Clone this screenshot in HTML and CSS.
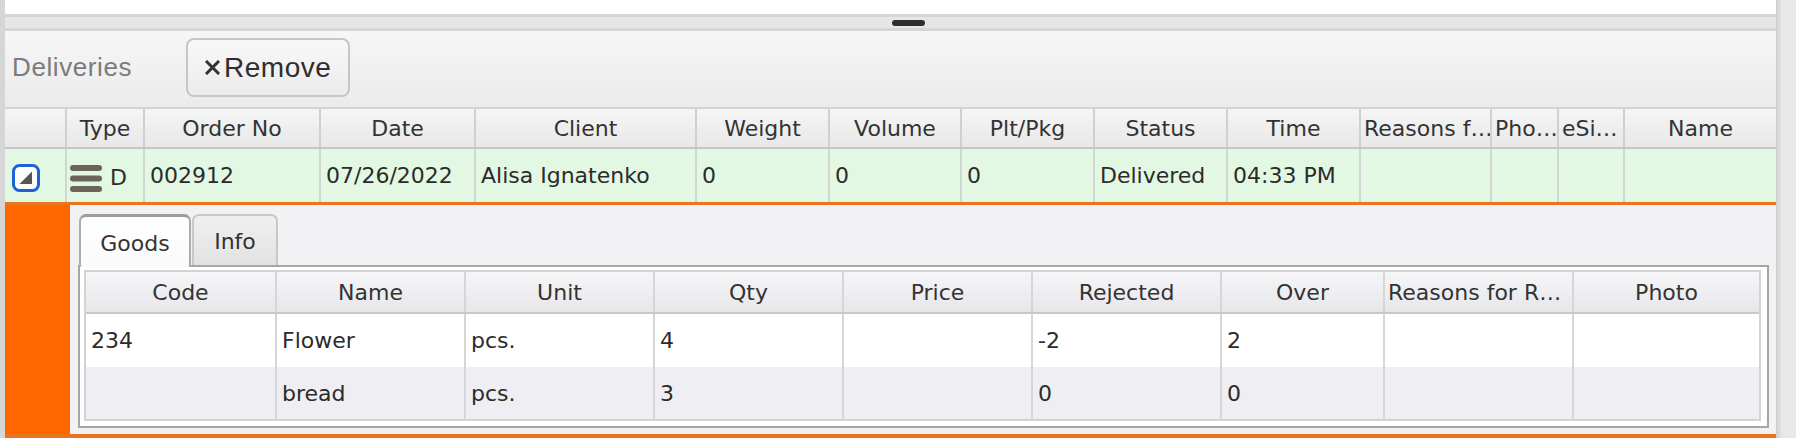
FILE: index.html
```html
<!DOCTYPE html>
<html lang="en">
<head>
  <meta charset="UTF-8">
  <meta name="viewport" content="width=device-width, initial-scale=1.0">
  <title>Deliveries</title>
  <link rel="stylesheet" href="styles.css">
</head>
<body>
  <div class="screen">
    <div class="workspace">
      <div class="top-pane"></div>
      <div class="splitter"><span class="grip"></span></div>

      <section class="deliveries">
        <div class="toolbar">
          <h2 class="toolbar-title">Deliveries</h2>
          <button class="btn" type="button">
            <svg class="btn-icon" width="15" height="15" viewBox="0 0 15 15"><path d="M2 2 L13 13 M13 2 L2 13" stroke="#333" stroke-width="3" stroke-linecap="square"/></svg>
            Remove
          </button>
        </div>

        <div class="grid">
          <div class="grid-head">
            <div class="cell"></div>
            <div class="cell">Type</div>
            <div class="cell">Order No</div>
            <div class="cell">Date</div>
            <div class="cell">Client</div>
            <div class="cell">Weight</div>
            <div class="cell">Volume</div>
            <div class="cell">Plt/Pkg</div>
            <div class="cell">Status</div>
            <div class="cell">Time</div>
            <div class="cell cut" title="Reasons for Rejection">Reasons f…</div>
            <div class="cell cut" title="Photo">Pho…</div>
            <div class="cell cut" title="eSignature">eSi…</div>
            <div class="cell">Name</div>
          </div>

          <!-- delivered order, expanded -->
          <div class="grid-row delivered">
            <div class="cell toggle-cell">
              <svg width="28" height="28" viewBox="0 0 28 28"><rect x="1.5" y="1.5" width="25" height="25" rx="6" fill="#fff" stroke="#1b63d6" stroke-width="3"/><path d="M7.5 20 L20 7.5 V20 Z" fill="#555"/></svg>
            </div>
            <div class="cell type-cell">
              <svg width="32" height="27" viewBox="0 0 32 27"><g fill="#6b645a"><rect x="0" y="0" width="32" height="6" rx="3"/><rect x="0" y="10.5" width="32" height="6" rx="3"/><rect x="0" y="21" width="32" height="6" rx="3"/></g></svg>
              D
            </div>
            <div class="cell">002912</div>
            <div class="cell">07/26/2022</div>
            <div class="cell">Alisa Ignatenko</div>
            <div class="cell">0</div>
            <div class="cell">0</div>
            <div class="cell">0</div>
            <div class="cell">Delivered</div>
            <div class="cell">04:33 PM</div>
            <div class="cell"></div>
            <div class="cell"></div>
            <div class="cell"></div>
            <div class="cell"></div>
          </div>

          <div class="detail">
            <div class="detail-gutter"></div>
            <div class="detail-panel">
              <div class="tabs">
                <button class="tab active" type="button">Goods</button>
                <button class="tab info" type="button">Info</button>
              </div>
              <div class="tab-body">
                <div class="goods">
                  <div class="goods-head">
                    <div class="cell">Code</div>
                    <div class="cell">Name</div>
                    <div class="cell">Unit</div>
                    <div class="cell">Qty</div>
                    <div class="cell">Price</div>
                    <div class="cell">Rejected</div>
                    <div class="cell">Over</div>
                    <div class="cell cut" title="Reasons for Rejection">Reasons for R…</div>
                    <div class="cell">Photo</div>
                  </div>
                  <div class="goods-row">
                    <div class="cell">234</div>
                    <div class="cell">Flower</div>
                    <div class="cell">pcs.</div>
                    <div class="cell">4</div>
                    <div class="cell"></div>
                    <div class="cell">-2</div>
                    <div class="cell">2</div>
                    <div class="cell"></div>
                    <div class="cell"></div>
                  </div>
                  <div class="goods-row alt">
                    <div class="cell"></div>
                    <div class="cell">bread</div>
                    <div class="cell">pcs.</div>
                    <div class="cell">3</div>
                    <div class="cell"></div>
                    <div class="cell">0</div>
                    <div class="cell">0</div>
                    <div class="cell"></div>
                    <div class="cell"></div>
                  </div>
                </div>
              </div>
            </div>
          </div>
        </div>
      </section>
    </div>
    <div class="side-strip"></div>
  </div>
</body>
</html>
```

FILE: styles.css
```css
* {
  box-sizing: border-box;
}

body {
  margin: 0;
  background: #e6e6e6;
  font-family: "DejaVu Sans", Verdana, sans-serif;
  color: #2b2b2b;
}

.screen {
  display: flex;
  width: 1796px;
  height: 438px;
  overflow: hidden;
}

.workspace {
  width: 1778px;
  border-left: 5px solid #d6d6d6;
  border-right: 2px solid #d0d0d0;
  background: #f2f1f4;
}

.side-strip {
  flex: 1;
  background: #e8e8e8;
  border-left: 3px solid #dcdcdc;
}

.top-pane {
  height: 14px;
  background: #fff;
}

.splitter {
  display: flex;
  align-items: center;
  height: 17px;
  background: #e6e6e6;
  border-top: 3px solid #d6d6d6;
  border-bottom: 3px solid #d6d6d6;
}

.grip {
  width: 33px;
  height: 6px;
  margin-left: 887px;
  border-radius: 3px;
  background: #2e2e2e;
}

/* toolbar */
.toolbar {
  display: flex;
  align-items: center;
  height: 76px;
  padding: 0 0 3px 7px;
  background: linear-gradient(#f6f6f6, #ebebeb);
}

.toolbar-title {
  margin: 0 54px 0 0;
  font: 400 26px "Liberation Sans", Arial, sans-serif;
  letter-spacing: 0.6px;
  color: #7b7b7b;
}

.btn {
  display: flex;
  align-items: center;
  justify-content: center;
  gap: 4px;
  width: 164px;
  height: 59px;
  padding: 0;
  border: 2px solid #c6c6c6;
  border-radius: 8px;
  background: linear-gradient(#f8f8f8, #ececec);
  font: 28px "Liberation Sans", Arial, sans-serif;
  letter-spacing: 0.5px;
  color: #2e2e2e;
}

/* deliveries grid */
.grid-head,
.grid-row {
  display: grid;
  grid-template-columns: 62px 78px 176px 155px 221px 133px 132px 133px 133px 133px 131px 67px 66px 1fr;
}

.cell {
  display: flex;
  align-items: center;
  padding: 0 5px;
  border-right: 2px solid #d0d0d0;
  font-size: 22px;
  white-space: nowrap;
  overflow: hidden;
}

.cell:last-child {
  border-right: 0;
}

.grid-head {
  height: 42px;
  border-top: 2px solid #d2d2d2;
  border-bottom: 2px solid #c6c6c6;
  background: linear-gradient(#f5f5f5, #e8e8e8);
}

.grid-head .cell,
.goods-head .cell {
  justify-content: center;
  color: #333;
}

.grid-head .cell.cut,
.goods-head .cell.cut {
  justify-content: flex-start;
  padding: 0 0 0 3px;
}

.grid-row.delivered {
  height: 56px;
  background: #e3f8e3;
  border-bottom: 3px solid #e8761e;
}

.grid-row .cell {
  border-right-color: #d2d6d2;
}

.toggle-cell {
  padding: 4px 0 0 7px;
}

.type-cell {
  gap: 8px;
  padding: 3px 0 0 3px;
}

.type-cell svg {
  margin-top: 2px;
}

/* expanded detail */
.detail {
  display: flex;
  border-bottom: 4px solid #e8761e;
}

.detail-gutter {
  width: 65px;
  background: #ff6600;
}

.detail-panel {
  flex: 1;
  padding: 9px 7px 6px 8px;
  background: #f2f1f4;
}

.tabs {
  display: flex;
  align-items: flex-end;
  height: 51px;
  padding-left: 1px;
}

.tab {
  height: 51px;
  padding: 2px 0 0;
  border: 2px solid #c8c8c8;
  border-bottom: 0;
  border-radius: 7px 7px 0 0;
  background: linear-gradient(#f0f0f0, #e2e2e2);
  font: 22px "DejaVu Sans", Verdana, sans-serif;
  color: #333;
}

.tab.active {
  position: relative;
  z-index: 1;
  width: 112px;
  height: 53px;
  margin-bottom: -2px;
  border-color: #acacac;
  border-top: 3px solid #9c9c9c;
  background: linear-gradient(#fff, #fafafa);
}

.tab.info {
  width: 86px;
  margin-left: 1px;
}

.tab-body {
  padding: 3px 6px 5px 4px;
  border: 2px solid #a6a6a6;
  background: #fff;
}

.goods {
  border: 2px solid #d3d3d3;
}

.goods-head,
.goods-row {
  display: grid;
  grid-template-columns: 191px 189px 189px 189px 189px 189px 163px 189px 1fr;
}

.goods-head {
  height: 42px;
  border-bottom: 2px solid #c8c8c8;
  background: linear-gradient(#f6f6f8, #e7e6ea);
}

.goods-row {
  height: 53px;
  background: #fff;
}

.goods-row.alt {
  height: 52px;
  background: #efeef2;
}

.goods .cell {
  border-right-color: #d6d6d8;
}
```
